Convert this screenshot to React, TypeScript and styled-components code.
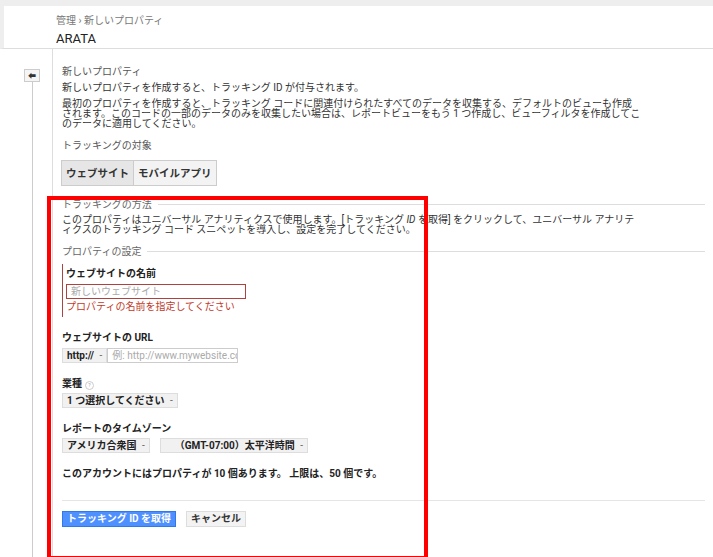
import React from "react";
import styled, { createGlobalStyle } from "styled-components";

const Global = createGlobalStyle`
  body { margin: 0; background: #fff; font-family: Roboto, "Noto Sans CJK JP", sans-serif; color: #333; }
`;

const Page = styled.div`
  width: 713px;
  height: 557px;
  position: relative;
  overflow: hidden;
  border-top: 6px solid #eee;
  box-sizing: border-box;
`;

const Header = styled.div`
  height: 43px;
  padding: 8px 0 0 52px;
  box-sizing: border-box;
  border-bottom: 1px solid #ddd;
  border-left: 4px solid #eee;
`;

const Crumb = styled.div`
  font-size: 10px;
  color: #777;
  line-height: 13px;
`;

const Title = styled.div`
  font-size: 13px;
  color: #222;
  margin-top: 4px;
`;

const Body = styled.div`
  display: flex;
`;

const Rail = styled.div`
  width: 52px;
  position: relative;
  padding-left: 24px;
  box-sizing: border-box;
`;

const RailLine = styled.div`
  position: absolute;
  left: 32px;
  top: 30px;
  bottom: 0;
  width: 1px;
  background: #ccc;
`;

const BackBtn = styled.div`
  position: relative;
  margin-top: 20px;
  width: 16px;
  height: 13px;
  box-sizing: border-box;
  border: 1px solid #ccc;
  background: #f5f5f5;
  display: flex;
  align-items: center;
  justify-content: center;
  font-size: 8px;
  z-index: 1;
`;

const Content = styled.div`
  flex: 1;
  border-left: 1px solid #ddd;
  padding: 16px 8px 0 9px;
  min-height: 510px;
  font-size: 10px;
  line-height: 13px;
`;

const P = styled.div<{ $mt?: number; $tight?: boolean; $c?: string }>`
  margin-top: ${(p) => p.$mt ?? 0}px;
  line-height: ${(p) => (p.$tight ? "10px" : "13px")};
  color: ${(p) => p.$c ?? "#333"};
  max-width: ${(p) => (p.$tight ? "580px" : "none")};
`;

const Tabs = styled.div`
  display: flex;
  margin-top: 8px;
`;

const Tab = styled.div<{ $on?: boolean }>`
  height: 24px;
  padding: 0 4px;
  display: flex;
  align-items: center;
  font-weight: bold;
  font-size: 10.5px;
  border: 1px solid #ccc;
  margin-left: -1px;
  background: ${(p) => (p.$on ? "#e6e6e6" : "#f3f3f3")};
  color: #333;
`;

const SectionHead = styled.div<{ $mt: number }>`
  display: flex;
  align-items: center;
  gap: 6px;
  color: #666;
  margin-top: ${(p) => p.$mt}px;
  &::after { content: ""; flex: 1; height: 1px; background: #ddd; }
`;

const ErrorField = styled.div`
  margin-top: 6px;
  border-left: 1px solid #a94442;
  padding: 3px 0 4px 3px;
`;

const Label = styled.div<{ $mt?: number }>`
  font-weight: bold;
  font-size: 10px;
  margin-top: ${(p) => p.$mt ?? 0}px;
  color: #222;
`;

const TextInput = styled.div<{ $err?: boolean; $w: number }>`
  width: ${(p) => p.$w}px;
  height: 15px;
  box-sizing: border-box;
  border: 1px solid ${(p) => (p.$err ? "#b0423d" : "#ccc")};
  color: #aaa;
  padding: 0 4px;
  line-height: 13px;
  white-space: nowrap;
  overflow: hidden;
  font-size: 10px;
`;

const Row = styled.div<{ $mt?: number; $gap?: number }>`
  display: flex;
  gap: ${(p) => p.$gap ?? 0}px;
  margin-top: ${(p) => p.$mt ?? 3}px;
`;

const Select = styled.div<{ $pl?: number }>`
  height: 15px;
  box-sizing: border-box;
  border: 1px solid #ddd;
  background: #f1f1f1;
  padding: 0 4px 0 ${(p) => p.$pl ?? 4}px;
  font-size: 10px;
  font-weight: bold;
  line-height: 13px;
  color: #222;
  white-space: nowrap;
  &::after { content: " -"; color: #666; margin-left: 3px; font-weight: normal; }
`;

const Help = styled.span`
  display: inline-block;
  width: 7px;
  height: 7px;
  border: 1px solid #ccc;
  border-radius: 50%;
  font-size: 5px;
  line-height: 7px;
  text-align: center;
  color: #999;
  margin-left: 3px;
  font-weight: normal;
`;

const Hr = styled.div`
  height: 1px;
  background: #e5e5e5;
  margin-top: 20px;
`;

const Btn = styled.div<{ $primary?: boolean }>`
  height: 16px;
  padding: 0 4px;
  font-size: 10px;
  font-weight: bold;
  line-height: 14px;
  box-sizing: border-box;
  border: 1px solid ${(p) => (p.$primary ? "#3079ed" : "#ddd")};
  background: ${(p) => (p.$primary ? "#4d90fe" : "#f3f3f3")};
  color: ${(p) => (p.$primary ? "#fff" : "#333")};
`;

const Annotation = styled.div`
  position: absolute;
  left: 47px;
  top: 190px;
  width: 381px;
  height: 364px;
  box-sizing: border-box;
  border: 4px solid #f00;
  pointer-events: none;
`;

export default function App() {
  return (
    <>
      <Global />
      <Page>
        <Header>
          <Crumb>管理 › 新しいプロパティ</Crumb>
          <Title>ARATA</Title>
        </Header>
        <Body>
          <Rail>
            <RailLine />
            <BackBtn>⬅</BackBtn>
          </Rail>
          <Content>
            <P $c="#555">新しいプロパティ</P>
            <P $mt={3}>新しいプロパティを作成すると、トラッキング ID が付与されます。</P>
            <P $mt={5} $tight>
              最初のプロパティを作成すると、トラッキング コードに関連付けられたすべてのデータを収集する、デフォルトのビューも作成されます。このコードの一部のデータのみを収集したい場合は、レポートビューをもう 1 つ作成し、ビューフィルタを作成してこのデータに適用してください。
            </P>
            <P $mt={10} $c="#555">トラッキングの対象</P>
            <Tabs>
              <Tab $on>ウェブサイト</Tab>
              <Tab>モバイルアプリ</Tab>
            </Tabs>
            <SectionHead $mt={12}>トラッキングの方法</SectionHead>
            <P $mt={4} $tight>
              このプロパティはユニバーサル アナリティクスで使用します。[トラッキング <i>ID</i> を取得] をクリックして、ユニバーサル アナリティクスのトラッキング コード スニペットを導入し、設定を完了してください。
            </P>
            <SectionHead $mt={10}>プロパティの設定</SectionHead>
            <ErrorField>
              <Label>ウェブサイトの名前</Label>
              <Row $mt={4}>
                <TextInput $err $w={180}>新しいウェブサイト</TextInput>
              </Row>
              <P $mt={1} $c="#c0392b">プロパティの名前を指定してください</P>
            </ErrorField>
            <Label $mt={14}>ウェブサイトの URL</Label>
            <Row $mt={4}>
              <Select>http://</Select>
              <TextInput $w={131}>例: http://www.mywebsite.com</TextInput>
            </Row>
            <Label $mt={14}>業種<Help>?</Help></Label>
            <Row>
              <Select>1 つ選択してください</Select>
            </Row>
            <Label $mt={14}>レポートのタイムゾーン</Label>
            <Row $gap={10}>
              <Select>アメリカ合衆国</Select>
              <Select $pl={14}>（GMT-07:00）太平洋時間</Select>
            </Row>
            <Label $mt={14}>このアカウントにはプロパティが 10 個あります。 上限は、50 個です。</Label>
            <Hr />
            <Row $mt={10} $gap={10}>
              <Btn $primary>トラッキング ID を取得</Btn>
              <Btn>キャンセル</Btn>
            </Row>
          </Content>
        </Body>
        <Annotation />
      </Page>
    </>
  );
}
